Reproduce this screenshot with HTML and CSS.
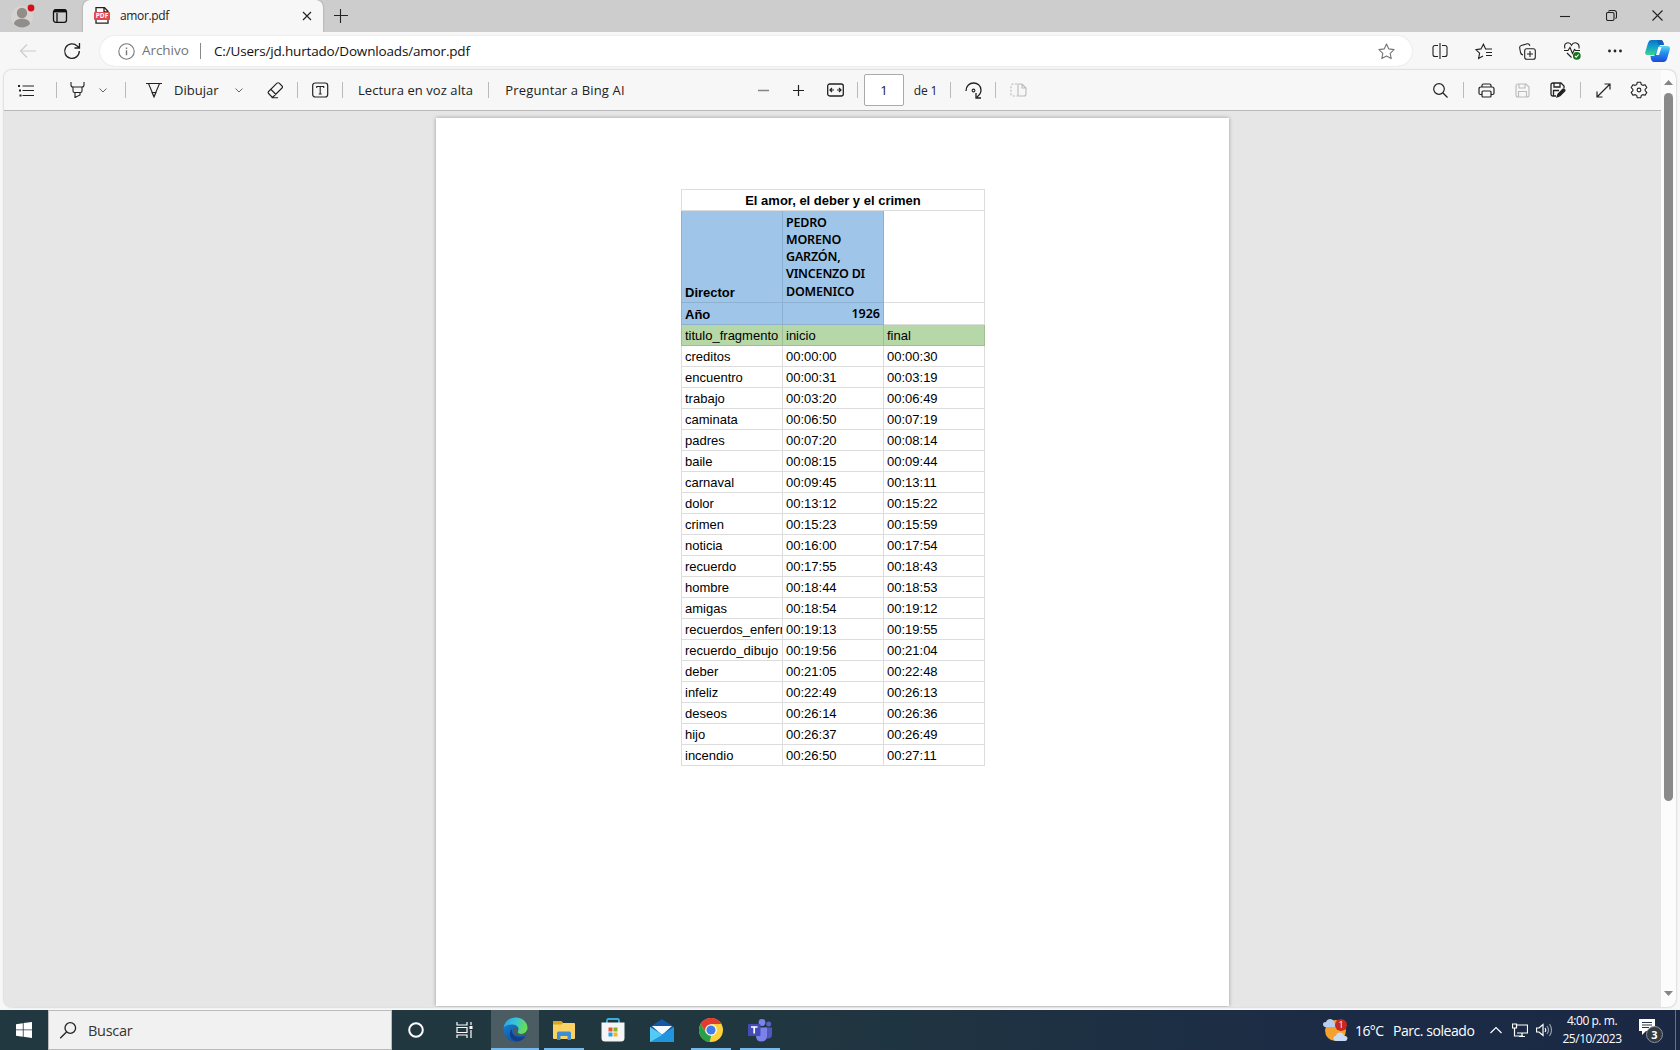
FILE: index.html
```html
<!DOCTYPE html>
<html lang="es">
<head>
<meta charset="utf-8">
<title>amor.pdf</title>
<link rel="stylesheet" href="styles.css">
</head>
<body>
<header class="titlebar">
  <svg class="avatar" width="24" height="26" viewBox="0 0 24 26"><circle cx="11" cy="14" r="11" fill="#d7d3d0"/><circle cx="11" cy="10" r="5.200" fill="#918d8a"/><path d="M3 21c0-7 16-7 16 0-4 4.500-12 4.500-16 0z" fill="#918d8a"/><circle cx="20" cy="5" r="3.400" fill="#d20f1b"/></svg>
  <svg class="tabs-menu" width="16" height="16" viewBox="0 0 16 16" fill="none" stroke="#111"><rect x="1.500" y="1.700" width="13" height="12.600" rx="2.300" stroke-width="1.300"/><path d="M2 3.500h12M5 5v9" stroke-width="1.300"/><path d="M2 2.900h12" stroke-width="2.600"/></svg>
  <div class="tab">
    <svg width="16" height="17" viewBox="0 0 16 17"><path d="M2 .7h8.500L14 4.200v12H2z" fill="#fff" stroke="#222" stroke-width="1.300"/><path d="M10 1v4h4" fill="none" stroke="#222" stroke-width="1.300"/><rect x="0" y="5" width="16" height="8" rx=".8" fill="#df4a4e"/><text x="8" y="11.400" class="pdf-mark">PDF</text></svg>
    <span class="tab-title">amor.pdf</span>
    <svg width="10" height="10" viewBox="0 0 10 10" class="line"><path d="M1 1l8 8M9 1L1 9"/></svg>
  </div>
  <svg class="new-tab line" width="14" height="14" viewBox="0 0 14 14"><path d="M6.500 0v14M0 6.500h14"/></svg>
  <div class="window-buttons">
    <svg class="line" width="10" height="10" viewBox="0 0 10 10"><path d="M0 5.500h10"/></svg>
    <svg class="line" width="11" height="11" viewBox="0 0 11 11"><rect x=".5" y="2.500" width="7.500" height="8" rx="1.500"/><path d="M2.500 1.500Q3 .5 4 .5h4Q10.500.5 10.500 3v4q0 1.200-1.200 1.500"/></svg>
    <svg class="line" width="11" height="11" viewBox="0 0 11 11"><path d="M.5.5l10 10M10.500.5l-10 10"/></svg>
  </div>
</header>

<nav class="address-row">
  <svg width="18" height="16" viewBox="0 0 18 16" fill="none" stroke="#ccc" stroke-width="1.200"><path d="M17 8H1.500M8 1.500L1.500 8 8 14.500"/></svg>
  <svg width="18" height="18" viewBox="0 0 18 18" fill="none" stroke="#222" stroke-width="1.300"><path d="M16.300 9A7.300 7.300 0 1 1 14.300 4.100L16.500 6M16.500 1v5h-5"/></svg>
  <div class="omnibox">
    <svg width="17" height="17" viewBox="0 0 17 17" fill="none" stroke="#777" stroke-width="1.100"><circle cx="8.500" cy="8.500" r="7.700"/><path d="M8.500 7.300v5M8.500 4.500v1.400" stroke-width="1.400"/></svg>
    <span class="scheme">Archivo</span>
    <span class="url">C:/Users/jd.hurtado/Downloads/amor.pdf</span>
    <svg width="17" height="17" viewBox="0 0 17 17" fill="none" stroke="#777" stroke-width="1.100"><path d="M8.500 1l2.300 4.900 5.300.7-3.900 3.700 1 5.300-4.700-2.600-4.700 2.600 1-5.300L.9 6.600l5.300-.7z" stroke-linejoin="round"/></svg>
  </div>
  <svg class="line dark split" width="16" height="16" viewBox="0 0 16 16"><path d="M6 2.500H3Q1 2.500 1 4.500v7q0 2 2 2h3M10 2.500h3q2 0 2 2v7q0 2-2 2h-3M8 0v16"/></svg>
  <svg class="line dark" width="17" height="17" viewBox="0 0 17 17"><path d="M10.500 5.800L8.400 1.200 6 5.900l-5.200.7 3.800 3.600-1 5.300L8 13M10 6h7M11 9.500h6M11 12.500h6"/></svg>
  <svg class="line dark" width="17" height="17" viewBox="0 0 17 17"><rect x="5.700" y="5.700" width="10.600" height="10.600" rx="2"/><path d="M11 8v6M8 11h6M4 12Q2 11.500 1.500 9.500L.7 5q-.3-2 1.600-2.500l6-1.700q2-.3 2.600 2"/></svg>
  <svg width="18" height="18" viewBox="0 0 18 18" fill="none" stroke="#222" stroke-width="1.100"><path d="M2 6.500C0 0 6.500-.8 8.500 3.200 10.500-.8 17 0 16 6.500M1 8.500h4l2-3 2.500 6 2-4 1 1H17M4 11l4.500 4.500"/><circle cx="13.800" cy="13.800" r="3.900" fill="#13761b" stroke="none"/><path d="M12 14l1.200 1.200 2.500-2.700" stroke="#fff"/></svg>
  <svg width="16" height="6" viewBox="0 0 16 6" fill="#222"><circle cx="2.500" cy="3" r="1.400"/><circle cx="8" cy="3" r="1.400"/><circle cx="13.500" cy="3" r="1.400"/></svg>
  <svg width="25" height="24" viewBox="0 0 25 24"><defs><linearGradient id="cp1" x1="0" y1="0" x2="0" y2="1"><stop offset="0" stop-color="#0b73c9"/><stop offset=".5" stop-color="#16a3cb"/><stop offset="1" stop-color="#3ad884"/></linearGradient><linearGradient id="cp2" x1="0" y1="0" x2="0" y2="1"><stop offset="0" stop-color="#62d2f5"/><stop offset=".4" stop-color="#2494ec"/><stop offset="1" stop-color="#1b49dd"/></linearGradient></defs><path d="M6 1h10q2 0 3 5h-4L11 16H3Q-1 16 .6 12L3 4Q4 1 6 1z" fill="url(#cp1)"/><path d="M19 23H9q-3 0-3.500-6H9L14 7h8q4 0 2.500 4.500L22 20q-1 3-3 3z" fill="url(#cp2)"/><path d="M6 1h10q2 0 3 5h-4q-2 0-3-5z" fill="#1361b9"/><path d="M11 16l2.500-8h3L14 16z" fill="#fff"/></svg>
</nav>

<main class="viewer">
  <div class="viewer-main">
    <div class="toolbar">
      <svg class="line" width="17" height="13" viewBox="0 0 17 13"><path d="M4.500 2H16M4.500 6.500H16M4.500 11.500H16" stroke-width="1.200"/><path d="M0 2h2M1 6.500h2M1.500 11.500h2" stroke-width="2"/></svg>
      <i class="sep"></i>
      <svg class="line" width="15" height="16" viewBox="0 0 15 16"><path d="M1 0v3q0 2 2 2h9q2 0 2-2V0M3 5v4q0 1.500 1.500 1.500h6Q12 10.500 12 9V5M5 10.500v5l5-2.500v-2.500"/></svg>
      <svg class="chev" width="8" height="5" viewBox="0 0 8 5"><path d="M.5.5L4 4 7.500.5"/></svg>
      <i class="sep"></i>
      <svg class="line" width="16" height="16" viewBox="0 0 16 16"><path d="M0 1.500h2.500l5 12h1l5-12H16M2.500 1.500h11M6 10.500h4L8 15z"/></svg>
      <span class="label draw">Dibujar</span>
      <svg class="chev" width="8" height="5" viewBox="0 0 8 5"><path d="M.5.5L4 4 7.500.5"/></svg>
      <svg class="line" width="17" height="17" viewBox="0 0 17 17"><path d="M10 1.200L1.600 9.500q-1 1 0 2l2.900 3q1 1 2 0L15 6q1-1 0-2l-2.800-2.800q-1-1-2.200 0zM4 7.500l5 5M4.500 15.700H11"/></svg>
      <i class="sep"></i>
      <svg class="line" width="17" height="16" viewBox="0 0 17 16"><rect x=".7" y="1" width="15" height="14" rx="2.500" stroke-width="1.200"/><path d="M4.700 6V4.500h7V6M8.200 4.500v7.500M6.700 12h3"/></svg>
      <i class="sep"></i>
      <span class="label mid read">Lectura en voz alta</span>
      <i class="sep"></i>
      <span class="label mid ask">Preguntar a Bing AI</span>
      <b></b>
      <svg width="11" height="11" viewBox="0 0 11 11"><path d="M0 5.500h11" stroke="#858585" stroke-width="1.600"/></svg>
      <svg class="line" width="11" height="11" viewBox="0 0 11 11"><path d="M0 5.500h11M5.500 0v11" stroke-width="1.200"/></svg>
      <svg class="line" width="17" height="14" viewBox="0 0 17 14"><rect x=".7" y="1" width="15.600" height="12" rx="2" stroke-width="1.300"/><path d="M3.500 7H7M10 7h3.500M5 5L3 7l2 2M12 5l2 2-2 2" stroke-width="1.200"/></svg>
      <i class="sep"></i>
      <span class="page-input">1</span>
      <span class="label mid count">de 1</span>
      <i class="sep"></i>
      <svg class="line" width="17" height="17" viewBox="0 0 17 17"><path d="M1 9C1-1.500 16-1.500 16 8q0 4-4 7M11 11v5h5" stroke-width="1.300"/><circle cx="8.500" cy="8.500" r="1.400"/></svg>
      <i class="sep"></i>
      <svg width="17" height="14" viewBox="0 0 17 14" fill="none" stroke="#bbb" stroke-width="1.100"><path d="M7 1H3Q1 1 1 3v8q0 2 2 2h4" stroke-dasharray="2 1.500"/><path d="M8 1h4l4 4v6q0 2-2 2H8zM12 1v4h4"/></svg>
      <b></b>
      <svg class="line" width="15" height="15" viewBox="0 0 15 15"><circle cx="6" cy="6" r="5.300" stroke-width="1.200"/><path d="M10 10l4.500 4.500" stroke-width="1.200"/></svg>
      <i class="sep"></i>
      <svg class="line" width="17" height="15" viewBox="0 0 17 15"><path d="M4 4V2.500Q4 1 5.500 1h6Q13 1 13 2.500V4M4 11.500H2.500Q1 11.500 1 10V6q0-2 2-2h11q2 0 2 2v4q0 1.500-1.500 1.500H13" stroke-width="1.200"/><rect x="4" y="8" width="9" height="6" rx="1" stroke-width="1.200"/></svg>
      <svg width="15" height="15" viewBox="0 0 15 15" fill="none" stroke="#bbb" stroke-width="1.100"><path d="M3 1h8l3 3v8q0 2-2 2H3q-2 0-2-2V3q0-2 2-2zM4 1v4h6V1M3.500 14V8.500h8V14"/></svg>
      <svg class="line" width="16" height="16" viewBox="0 0 16 16"><path d="M6 14H3q-2 0-2-2V3q0-2 2-2h8l3 3v2M4 1v4h6V1M3.500 14V8.500H9" stroke-width="1.300"/><path d="M7 15l1-3 5-5q2-.5 2 1.800l-5 5z" fill="#222"/></svg>
      <i class="sep"></i>
      <svg class="line" width="15" height="15" viewBox="0 0 15 15"><path d="M1 14L14 1M8.500 1H14v5.500M1 8.500V14h5.500" stroke-width="1.200"/></svg>
      <svg class="line gear" width="18" height="18" viewBox="0 0 18 18"><path d="M7.300 1.200h3.400l.6 2.300 1.500.9 2.300-.7 1.700 2.900-1.700 1.700v1.400l1.700 1.700-1.700 2.900-2.300-.7-1.500.9-.6 2.300H7.300l-.6-2.300-1.500-.9-2.300.7-1.700-2.900 1.700-1.700V8.300L1.200 6.600l1.700-2.900 2.300.7 1.500-.9z" stroke-linejoin="round"/><circle cx="9" cy="9" r="1.900"/></svg>
    </div>
    <div class="canvas">
      <article class="sheet">
        <table>
          <tr class="film"><th colspan="3">El amor, el deber y el crimen</th></tr>
          <tr class="director"><th>Director</th><td>PEDRO MORENO GARZÓN, VINCENZO DI DOMENICO</td><td class="blank"></td></tr>
          <tr class="year"><th>Año</th><td>1926</td><td class="blank"></td></tr>
          <tr class="columns"><td>titulo_fragmento</td><td>inicio</td><td>final</td></tr>
          <tr><td>creditos</td><td>00:00:00</td><td>00:00:30</td></tr>
          <tr><td>encuentro</td><td>00:00:31</td><td>00:03:19</td></tr>
          <tr><td>trabajo</td><td>00:03:20</td><td>00:06:49</td></tr>
          <tr><td>caminata</td><td>00:06:50</td><td>00:07:19</td></tr>
          <tr><td>padres</td><td>00:07:20</td><td>00:08:14</td></tr>
          <tr><td>baile</td><td>00:08:15</td><td>00:09:44</td></tr>
          <tr><td>carnaval</td><td>00:09:45</td><td>00:13:11</td></tr>
          <tr><td>dolor</td><td>00:13:12</td><td>00:15:22</td></tr>
          <tr><td>crimen</td><td>00:15:23</td><td>00:15:59</td></tr>
          <tr><td>noticia</td><td>00:16:00</td><td>00:17:54</td></tr>
          <tr><td>recuerdo</td><td>00:17:55</td><td>00:18:43</td></tr>
          <tr><td>hombre</td><td>00:18:44</td><td>00:18:53</td></tr>
          <tr><td>amigas</td><td>00:18:54</td><td>00:19:12</td></tr>
          <tr><td>recuerdos_enferm</td><td>00:19:13</td><td>00:19:55</td></tr>
          <tr><td>recuerdo_dibujo</td><td>00:19:56</td><td>00:21:04</td></tr>
          <tr><td>deber</td><td>00:21:05</td><td>00:22:48</td></tr>
          <tr><td>infeliz</td><td>00:22:49</td><td>00:26:13</td></tr>
          <tr><td>deseos</td><td>00:26:14</td><td>00:26:36</td></tr>
          <tr><td>hijo</td><td>00:26:37</td><td>00:26:49</td></tr>
          <tr><td>incendio</td><td>00:26:50</td><td>00:27:11</td></tr>
        </table>
      </article>
    </div>
  </div>
  <div class="scrollbar">
    <svg width="9" height="5" viewBox="0 0 9 5"><path d="M0 5L4.500 0 9 5z" fill="#858585"/></svg>
    <div class="thumb"></div>
    <svg width="9" height="5" viewBox="0 0 9 5"><path d="M0 0h9L4.500 5z" fill="#858585"/></svg>
  </div>
</main>

<footer class="taskbar">
  <div class="start"><svg width="16" height="16" viewBox="0 0 16 16" fill="#fff"><path d="M0 2.200L6.800 1.200v6.300H0zM7.600 1.100L16 0v7.500H7.600zM0 8.300h6.800v6.400L0 13.700zM7.600 8.300H16V16l-8.400-1.200z"/></svg></div>
  <div class="search"><svg width="17" height="17" viewBox="0 0 17 17" fill="none" stroke="#222" stroke-width="1.300"><circle cx="10.300" cy="6" r="5.300"/><path d="M6.500 10L.2 16.300"/></svg><span>Buscar</span></div>
  <div class="app cortana"><svg width="16" height="16" viewBox="0 0 16 16"><circle cx="8" cy="8" r="6.800" fill="none" stroke="#fff" stroke-width="2"/></svg></div>
  <div class="app view"><svg width="17" height="16" viewBox="0 0 17 16" fill="none" stroke="#fff" stroke-width="1.200"><path d="M1 0v3h10V0M1 16v-3h10v3M1 5.500h10v5H1zM15 0v3M15 8v8"/><path d="M13.500 5.500h3" stroke-width="3"/></svg></div>
  <div class="app edge active"><svg width="25" height="25" viewBox="0 0 25 25"><defs><linearGradient id="e1" x1="0" y1="0" x2="1" y2=".3"><stop offset="0" stop-color="#2a9fe4"/><stop offset=".5" stop-color="#36c3dd"/><stop offset="1" stop-color="#66dc58"/></linearGradient><linearGradient id="e2" x1="0" y1="0" x2=".7" y2="1"><stop offset="0" stop-color="#1e87d8"/><stop offset="1" stop-color="#0c4e9f"/></linearGradient></defs><circle cx="12.500" cy="12.500" r="12" fill="url(#e2)"/><path d="M.6 11C1.500 4.500 6.500.5 12.500.5c8 0 12 5.500 12 10.500 0 4-3 6-6.500 6-3 0-4.300-1.200-3-3 1.500-2.500 0-6-5-6.500C6 7 2 8.500.6 11z" fill="url(#e1)"/><path d="M9 12c-1 5 3 10 13 8-2 3-6 5-10 4-5-2-7-8-3-12z" fill="#123f87"/><path d="M10 12.500C9 17 14 20.500 22.500 18.500 24 17 24.500 14 24 13c-1 3-4 4-6 4-3 0-4.300-1.200-3-3 .8-1.700-3.500-5-5-1.500z" fill="#4b5c62"/></svg></div>
  <div class="app open"><svg width="22" height="19" viewBox="0 0 22 19"><path d="M0 1.200Q0 0 1 0h7l2 2h11q1 0 1 1v14q0 1-1 1H1q-1 0-1-1z" fill="#fbd364"/><path d="M0 0h8l2 2-1.500 1.500H0z" fill="#dfa21a"/><path d="M4 19v-7q0-1.500 1.500-1.500h11Q18 10.500 18 12v7h-3.500v-4h-7v4z" fill="#3c8fd4"/></svg></div>
  <div class="app"><svg width="24" height="24" viewBox="0 0 24 24"><path d="M6 6V2.500Q6 1 7.500 1h9Q18 1 18 2.500V6" fill="none" stroke="#36b0e5" stroke-width="1.800"/><path d="M.5 4.500h23V20q0 3.500-3.500 3.500H4Q.5 23.500.5 20z" fill="#f5f5f5"/><path d="M7.500 9.500h4v4h-4z" fill="#ee5131"/><path d="M12.500 9.500h4v4h-4z" fill="#7eb928"/><path d="M7.500 14.500h4v4h-4z" fill="#27a3e7"/><path d="M12.500 14.500h4v4h-4z" fill="#fab420"/></svg></div>
  <div class="app"><svg width="24" height="23" viewBox="0 0 24 23"><path d="M0 8L12 0l12 8-12 10z" fill="#1459a7"/><path d="M2 7h20L12 16z" fill="#f7fbff"/><path d="M0 8l15 9 9-9v15H0z" fill="#37b5ee"/><path d="M24 8L0 23h24z" fill="#2295df"/><path d="M0 8l12 8L0 23z" fill="#54cbf5"/></svg></div>
  <div class="app open"><svg width="24" height="24" viewBox="0 0 24 24"><circle cx="12" cy="12" r="12" fill="#fdd13c"/><path d="M1.600 6A12 12 0 0 1 22.400 6H12L7 14.500z" fill="#e33b2e"/><path d="M1.600 6l5.500 9L12 17.800h.2L10.500 24A12 12 0 0 1 1.600 6z" fill="#26a148"/><circle cx="12" cy="12" r="5.800" fill="#fff"/><circle cx="12" cy="12" r="4.600" fill="#3f7eea"/></svg></div>
  <div class="app open"><svg width="24" height="23" viewBox="0 0 24 23"><circle cx="20.700" cy="5" r="2.500" fill="#5b62c7"/><circle cx="14" cy="3.500" r="3.400" fill="#7b83eb"/><path d="M17 8.500h7v7q0 4-4 4h-3z" fill="#5158bd"/><path d="M8 8.500h11v8q0 6-5.500 6T8 17z" fill="#7b83eb"/><rect y="5" width="12.500" height="12" rx="1" fill="#464cb5"/><path d="M3 8h6.500M6.200 8v6.500" stroke="#fff" stroke-width="1.700"/></svg></div>
  <div class="tray">
    <svg class="weather" width="25" height="23" viewBox="0 0 25 23"><circle cx="12.500" cy="11.500" r="10.500" fill="#f5a22d"/><path d="M3 8Q0 8 0 5.200 0 3 3 3q1-3 4.500-3Q11 .5 11.500 4q2 2 0 4z" fill="#b8cdf0"/><path d="M13 22q-3-.5-2.500-3.200.5-2 2.500-2 1-3.300 4-3.300 3.300 0 4 3.300 3.300 0 3.500 2.700Q24 22 22 22z" fill="#c8dcf7"/><circle cx="18" cy="6" r="6" fill="#c8281f"/><text x="18" y="9" class="alert-number">1</text></svg>
    <span class="temp">16°C</span>
    <span class="sky">Parc. soleado</span>
    <svg width="12" height="8" viewBox="0 0 12 8" class="tray-line"><path d="M.5 7L6 1.500 11.500 7"/></svg>
    <svg width="16" height="15" viewBox="0 0 16 15" class="tray-line"><path d="M5 2h10.500v8H5M2.500 5v8H11M10 10v3M7 13.500h6M.5 1h4v4h-4z"/></svg>
    <svg width="17" height="14" viewBox="0 0 17 14" class="tray-line speaker"><path d="M.5 5h2.500L7 1.500v11L3 9H.5zM9 5q1.500 2 0 4"/><path d="M11 3q3 4 0 8M13.500 1q4 6 0 12" opacity=".55"/></svg>
    <div class="clock"><span class="time">4:00 p. m.</span><span class="date">25/10/2023</span></div>
    <svg class="notice" width="26" height="26" viewBox="0 0 26 26"><path d="M1 1h16v12H8l-4 4v-4H1z" fill="#fff"/><path d="M4 4.500h10M4 7h10M4 9.500h7" stroke="#26354b"/><circle cx="16.500" cy="16.500" r="8" fill="#333a40" stroke="#8b929b"/><text x="16.500" y="20.500" class="notice-number">3</text></svg>
    <i class="peek"></i>
  </div>
</footer>
</body>
</html>
```
FILE: styles.css
```css
* { box-sizing: border-box; }
body {
  margin: 0;
  width: 1680px;
  height: 1050px;
  overflow: hidden;
  display: flex;
  flex-direction: column;
  background: #f7f7f7;
  color: #222;
  font-family: "Open Sans", "Noto Sans", sans-serif;
  font-size: 13px;
}
svg { display: block; flex: none; }
.line { fill: none; stroke: #222; stroke-width: 1.1; }
.chev { fill: none; stroke: #666; stroke-width: 1; }

.titlebar {
  height: 32px;
  flex: none;
  display: flex;
  align-items: center;
  background: #cdcdcd;
}
.avatar { margin-left: 11px; }
.tabs-menu { margin-left: 17px; }
.tab {
  align-self: stretch;
  width: 240px;
  margin-left: 15px;
  padding: 0 11px 1px;
  display: flex;
  align-items: center;
  border-radius: 7px 7px 0 0;
  background: #f7f7f7;
  box-shadow: 0 0 2px #0005;
  clip-path: inset(0 -3px 0 -3px);
}
.tab-title { flex: 1; margin-left: 10px; font-size: 12px; letter-spacing: -.35px; }
.pdf-mark { font: bold 6.500px "Open Sans", sans-serif; fill: #fff; text-anchor: middle; }
.new-tab { margin-left: 11px; }
.window-buttons {
  height: 31px;
  align-self: start;
  margin-left: auto;
  display: grid;
  grid-template-columns: 46px 46px 46px;
  justify-items: center;
  align-items: center;
}

.address-row {
  height: 38px;
  flex: none;
  padding-left: 6px;
  display: grid;
  grid-template-columns: 44px 50px 1312px 5px 45px 43px 44px 45px 42px 42px;
  align-items: center;
  justify-items: center;
}
.address-row > svg:nth-child(2) { justify-self: start; margin-left: 13px; }
.address-row .split { grid-column: 5; }
.omnibox {
  width: 1312px;
  height: 30px;
  padding: 0 17px 0 18px;
  display: flex;
  align-items: center;
  border-radius: 15px;
  background: #fff;
  box-shadow: 0 0 2px #0002;
}
.scheme {
  width: 59px;
  height: 16px;
  margin-left: 7px;
  line-height: 15px;
  border-right: 1px solid #888;
  color: #737373;
  font-size: 13.500px;
  letter-spacing: -.05px;
}
.url { flex: 1; margin-left: 13px; color: #111; font-size: 13.500px; letter-spacing: -.17px; }

.viewer {
  width: 1672px;
  height: 937px;
  flex: none;
  margin-left: 4px;
  display: flex;
  overflow: hidden;
  border-radius: 8px;
  background: #fcfcfc;
  box-shadow: 0 0 2px #0005;
}
.viewer-main { width: 1657px; display: flex; flex-direction: column; }
.toolbar {
  height: 41px;
  flex: none;
  display: grid;
  grid-template-columns: 44px 17px 24px 28px 17px 40px 50px 30px 42px 3px 42px 3px 143px 3px 150px 106px 34px 37px 37px 7px 46px 37px 12px 34px 10px 36px 384px 41px 4px 42px 30px 42px 2px 44px 28px;
  align-items: center;
  justify-items: center;
  border-bottom: 1px solid #b9b9b9;
  background: #f7f7f7;
}
.sep { width: 1px; height: 16px; background: #bbb; }
.label { justify-self: start; white-space: nowrap; letter-spacing: -.2px; }
.label.mid { justify-self: center; }
.label.draw { letter-spacing: 0; }
.label.read { letter-spacing: .07px; }
.label.ask { letter-spacing: .15px; }
.label.count { font-size: 12px; }
.page-input {
  width: 40px;
  height: 32px;
  line-height: 30px;
  border: 1px solid #aaa;
  border-radius: 2px;
  background: #fff;
  text-align: center;
}
.canvas { flex: 1; padding: 7px 0 2px 432px; background: #e6e6e6; }
.sheet {
  width: 793px;
  height: 888px;
  padding: 71px 0 0 245px;
  background: #fff;
  box-shadow: 0 0 4px #0005;
}
.scrollbar {
  width: 15px;
  padding: 10px 0 11px;
  display: flex;
  flex-direction: column;
  align-items: center;
}
.thumb { width: 9px; height: 708px; margin: 8px 0 auto; border-radius: 5px; background: #8a8a8a; }

table {
  width: 304px;
  table-layout: fixed;
  border-collapse: collapse;
  color: #000;
  font: 13px/15px "Liberation Sans", Arial, sans-serif;
}
th, td {
  height: 21px;
  padding: 0 3px;
  overflow: hidden;
  border: 1px solid #ddd;
  text-align: left;
  white-space: nowrap;
}
.film th { text-align: center; }
.director th, .year th, .director td:not(.blank), .year td:not(.blank) {
  background: #9fc5e8;
  border-color: #8eb1d2;
}
.director th { height: 92px; vertical-align: bottom; padding-bottom: 2px; }
.director td, .year td { font-family: "Noto Sans", sans-serif; font-weight: 600; font-size: 12.500px; }
.director td { white-space: normal; line-height: 17.300px; letter-spacing: -.2px; vertical-align: bottom; padding-bottom: 2px; }
.year th, .year td { height: 22px; }
.year th { padding-top: 2px; }
.year td { text-align: right; }
.columns td { background: #b6d7a8; border-color: #a1be94; }

.taskbar {
  height: 40px;
  flex: none;
  margin-top: 3px;
  display: flex;
  background: linear-gradient(90deg, #213840, #213740 45%, #1b2b45 80%, #1a2844);
  color: #fff;
}
.start { width: 48px; display: grid; place-items: center; }
.search {
  width: 344px;
  padding-left: 11px;
  display: flex;
  align-items: center;
  gap: 11px;
  border: 1px solid #bbb;
  background: #f1f1f1;
  color: #333;
  font-size: 14.500px;
  letter-spacing: -.3px;
}
.app { width: 49px; display: grid; place-items: center; }
.cortana { width: 48px; }
.view { width: 48px; }
.edge { width: 48px; margin-left: 3px; }
.active { background: #4b5c62; border-bottom: 2px solid #76b9ed; }
.open { background: linear-gradient(#76b9ed, #76b9ed) center bottom / 40px 2px no-repeat; }
.tray { flex: 1; display: flex; align-items: center; padding-left: 539px; }
.temp, .sky { white-space: nowrap; font-size: 14px; }
.temp { width: 28px; margin-left: 7px; letter-spacing: -.6px; }
.sky { width: 97px; margin-left: 10px; letter-spacing: -.45px; }
.tray-line { fill: none; stroke: #fff; stroke-width: 1.2; }
.tray-line + .tray-line { margin-left: 10px; }
.tray-line + .speaker { margin-left: 8px; }
.clock {
  width: 78px;
  display: flex;
  flex-direction: column;
  align-items: center;
  line-height: 18px;
  font-size: 12px;
  letter-spacing: -.45px;
}
.notice { margin-left: 7px; margin-top: 2px; }
.notice-number { font: bold 11px "Open Sans", sans-serif; fill: #fff; text-anchor: middle; }
.alert-number { font: 9px "Open Sans", sans-serif; fill: #fff; text-anchor: middle; }
.peek { width: 1px; align-self: stretch; margin-left: auto; margin-right: 4px; background: #66718a; }
```
